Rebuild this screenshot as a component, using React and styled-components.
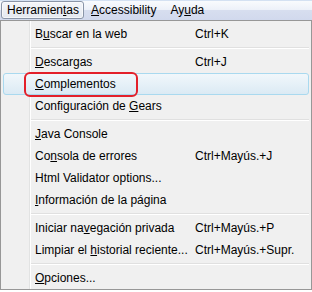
import React from "react";
import styled, { createGlobalStyle } from "styled-components";

const Global = createGlobalStyle`
  html, body { margin: 0; padding: 0; background: #fff; }
  body { font-family: "Liberation Sans", Arial, sans-serif; font-size: 12px; color: #000; }
`;

const Page = styled.div`
  position: relative;
  width: 312px;
  height: 292px;
  overflow: hidden;
`;

const MenuBar = styled.div`
  display: flex;
  align-items: center;
  height: 20px;
  box-sizing: border-box;
  padding: 1px 0 0 1px;
  border-top: 1px solid #d4e1f2;
  background: linear-gradient(to bottom, #f9fbfd 0%, #edf1f9 45%, #d7deef 50%, #d1d9ed 100%);
`;

const BarItem = styled.div`
  height: 18px;
  box-sizing: border-box;
  display: flex;
  align-items: center;
  padding: 0 ${p => (p.$open ? "4px" : "6px")} 0 ${p => (p.$open ? "5px" : "6px")};
  margin-top: -2px;
  border: 1px solid ${p => (p.$open ? "#8a95a8" : "transparent")};
  border-radius: 3px;
  background: ${p => (p.$open ? "linear-gradient(to bottom, #f4f6fa, #e4e8f0)" : "transparent")};
  box-shadow: ${p => (p.$open ? "inset 0 0 0 1px rgba(255,255,255,0.6)" : "none")};
  white-space: nowrap;
`;

const Menu = styled.div`
  width: 312px;
  box-sizing: border-box;
  border: 1px solid #979797;
  padding: 2px 0 0;
  background-color: #f0f0f0;
  background-image: linear-gradient(
    to right,
    transparent 28px,
    #e2e3e3 28px,
    #e2e3e3 29px,
    #ffffff 29px,
    #ffffff 30px,
    transparent 30px
  );
`;

const Item = styled.div`
  display: grid;
  grid-template-columns: 34px 160px 1fr;
  align-items: center;
  height: 22px;
  box-sizing: border-box;
  margin: 0 ${p => (p.$hot ? "2px" : "0")};
  border: 1px solid ${p => (p.$hot ? "#a9d9ef" : "transparent")};
  border-radius: 3px;
  background: ${p => (p.$hot ? "linear-gradient(to bottom, #f1f7fb, #dbeaf4)" : "transparent")};
  white-space: nowrap;
  & > span:first-child { grid-column: 2; margin-left: ${p => (p.$hot ? "-3px" : "-1px")}; }
  & > span:nth-child(2) { margin-left: ${p => (p.$hot ? "-3px" : "-1px")}; }
`;

const Separator = styled.div`
  height: 6px;
  display: flex;
  align-items: center;
  padding-left: 30px;
  padding-right: 2px;
  &::before {
    content: "";
    flex: 1;
    height: 1px;
    border-bottom: 1px solid #fff;
    background: #e0e0e0;
  }
`;

const Key = styled.u`
  text-decoration: underline;
  text-underline-offset: 1px;
`;

const Annotation = styled.div`
  position: absolute;
  left: 24px;
  top: 72px;
  width: 114px;
  height: 25px;
  box-sizing: border-box;
  border: 2px solid #e3202a;
  border-radius: 6px;
  pointer-events: none;
`;

const L = ({ text, k }) => {
  const i = text.indexOf(k);
  if (i < 0) return <span>{text}</span>;
  return (
    <span>
      {text.slice(0, i)}
      <Key>{k}</Key>
      {text.slice(i + k.length)}
    </span>
  );
};

const groups = [
  [["Buscar en la web", "u", "Ctrl+K"]],
  [
    ["Descargas", "D", "Ctrl+J"],
    ["Complementos", "C", "", true],
    ["Configuración de Gears", "G", ""],
  ],
  [
    ["Java Console", "J", ""],
    ["Consola de errores", "n", "Ctrl+Mayús.+J"],
    ["Html Validator options...", "", ""],
    ["Información de la página", "I", ""],
  ],
  [
    ["Iniciar navegación privada", "v", "Ctrl+Mayús.+P"],
    ["Limpiar el historial reciente...", "h", "Ctrl+Mayús.+Supr."],
  ],
  [["Opciones...", "O", ""]],
];

export default function App() {
  return (
    <Page>
      <Global />
      <MenuBar>
        <BarItem $open>
          <span>Herramien<Key>t</Key>as</span>
        </BarItem>
        <BarItem>
          <span><Key>A</Key>ccessibility</span>
        </BarItem>
        <BarItem>
          <span>Ay<Key>u</Key>da</span>
        </BarItem>
      </MenuBar>
      <Menu>
        {groups.map((g, gi) => (
          <React.Fragment key={gi}>
            {gi > 0 && <Separator />}
            {g.map(([t, k, s, hot]) => (
              <Item key={t} $hot={hot}>
                {k ? <L text={t} k={k} /> : <span>{t}</span>}
                <span>{s}</span>
              </Item>
            ))}
          </React.Fragment>
        ))}
      </Menu>
      <Annotation />
    </Page>
  );
}
